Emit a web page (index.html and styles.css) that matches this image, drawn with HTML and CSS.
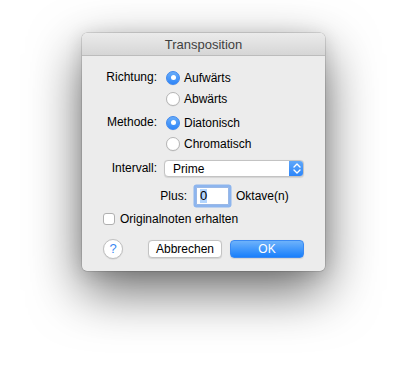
FILE: index.html
```html
<!DOCTYPE html>
<html lang="de">
<head>
<meta charset="utf-8">
<title>Transposition</title>
<link rel="stylesheet" href="styles.css">
</head>
<body>
<div class="stage">
  <div class="window">
    <div class="titlebar">Transposition</div>
    <div class="content">
      <div class="group">
        <div class="label">Richtung:</div>
        <div class="options">
          <div class="option"><span class="radio on"></span><span>Aufwärts</span></div>
          <div class="option"><span class="radio"></span><span>Abwärts</span></div>
        </div>
      </div>
      <div class="group group-2">
        <div class="label">Methode:</div>
        <div class="options">
          <div class="option"><span class="radio on"></span><span>Diatonisch</span></div>
          <div class="option"><span class="radio"></span><span>Chromatisch</span></div>
        </div>
      </div>
      <div class="popup-row">
        <div class="label">Intervall:</div>
        <div class="popup">
          <span class="popup-text">Prime</span>
          <span class="popup-arrows">
            <svg width="8" height="11" viewBox="0 0 8 11"><path d="M1 4 L4 1 L7 4 M1 7 L4 10 L7 7" fill="none" stroke="#fff" stroke-width="1.4" stroke-linecap="round" stroke-linejoin="round"/></svg>
          </span>
        </div>
      </div>
      <div class="plus-row">
        <div class="plus-label">Plus:</div>
        <div class="textfield"><span class="sel">0</span></div>
        <div class="unit">Oktave(n)</div>
      </div>
      <div class="check-row">
        <span class="checkbox"></span>
        <span>Originalnoten erhalten</span>
      </div>
      <div class="buttons">
        <span class="help">?</span>
        <span class="btn">Abbrechen</span>
        <span class="btn primary">OK</span>
      </div>
    </div>
  </div>
</div>
</body>
</html>
```

FILE: styles.css
```css
html, body {
  margin: 0;
  padding: 0;
  background: #ffffff;
}

body {
  font-family: "Liberation Sans", Arial, sans-serif;
  font-size: 12px;
  color: #000;
}

.stage {
  padding: 33px 0 0 82px;
  width: 414px;
  height: 387px;
  box-sizing: border-box;
}

.window {
  width: 243px;
  height: 238px;
  box-sizing: border-box;
  background: #ececec;
  border-radius: 5px;
  box-shadow: 0 0 0 0.5px rgba(0, 0, 0, 0.22), 0 20px 52px rgba(0, 0, 0, 0.58), 0 2px 18px rgba(0, 0, 0, 0.12);
  overflow: hidden;
  display: flex;
  flex-direction: column;
}

.titlebar {
  height: 22px;
  line-height: 23px;
  background: linear-gradient(#ebebeb, #d6d6d6);
  border-bottom: 1px solid #bcbcbc;
  text-align: center;
  font-size: 13px;
  color: #3f3f3f;
  flex: none;
}

.content {
  padding-top: 11px;
  display: flex;
  flex-direction: column;
}

.group {
  display: grid;
  grid-template-columns: 75px 1fr;
  column-gap: 9px;
}

.group-2 {
  margin-top: 3px;
}

.label {
  text-align: right;
  line-height: 21px;
}

.options {
  display: flex;
  flex-direction: column;
}

.option {
  height: 21px;
  display: flex;
  align-items: center;
  gap: 4px;
}

.radio {
  width: 14px;
  height: 14px;
  box-sizing: border-box;
  border-radius: 50%;
  background: #fff;
  border: 1px solid #b5b5b5;
  box-shadow: 0 0.5px 0.5px rgba(0, 0, 0, 0.08);
  display: flex;
  align-items: center;
  justify-content: center;
  flex: none;
}

.radio.on {
  background: linear-gradient(#68acf9, #2f86f8);
  border-color: #3d87ee;
}

.radio.on::after {
  content: "";
  width: 5px;
  height: 5px;
  border-radius: 50%;
  background: #fff;
}

.popup-row {
  margin-top: 6px;
  display: flex;
  align-items: center;
  height: 17px;
}

.popup-row .label {
  width: 75px;
  line-height: 17px;
}

.popup {
  margin-left: 7px;
  width: 140px;
  height: 17px;
  box-sizing: border-box;
  background: #fff;
  border: 1px solid #c3c3c3;
  border-radius: 4px;
  display: flex;
  align-items: center;
  overflow: hidden;
  box-shadow: 0 0.5px 1px rgba(0, 0, 0, 0.1);
}

.popup-text {
  flex: 1;
  padding-left: 8px;
}

.popup-arrows {
  width: 15px;
  height: 17px;
  margin-right: -1px;
  background: linear-gradient(#62a9f9, #2a84fa);
  display: flex;
  align-items: center;
  justify-content: center;
}

.plus-row {
  margin-top: 10px;
  display: flex;
  align-items: center;
  height: 18px;
}

.plus-label {
  width: 105px;
  text-align: right;
}

.textfield {
  margin-left: 9px;
  width: 33px;
  height: 18px;
  box-sizing: border-box;
  background: #fff;
  border: 1px solid #9ab8e6;
  box-shadow: 0 0 0 2.5px #8db5ee;
  border-radius: 1px;
  padding-left: 3px;
  display: flex;
  align-items: center;
  font-size: 13px;
}

.sel {
  background: #b3d5fd;
  line-height: 14px;
}

.unit {
  margin-left: 7px;
}

.check-row {
  margin-top: 7px;
  padding-left: 21px;
  display: flex;
  align-items: center;
  gap: 5px;
  height: 13px;
}

.checkbox {
  width: 12px;
  height: 12px;
  box-sizing: border-box;
  background: #fff;
  border: 1px solid #b0b0b0;
  border-radius: 3px;
  flex: none;
}

.buttons {
  margin-top: 14px;
  padding: 0 21px;
  display: flex;
  align-items: center;
  height: 19px;
}

.help {
  width: 20px;
  height: 20px;
  box-sizing: border-box;
  border-radius: 50%;
  background: #fff;
  border: 1px solid #c0c0c0;
  color: #3b8af3;
  font-size: 13px;
  display: flex;
  align-items: center;
  justify-content: center;
  box-shadow: 0 0.5px 1px rgba(0, 0, 0, 0.12);
}

.btn {
  margin-left: 25px;
  width: 74px;
  height: 18px;
  box-sizing: border-box;
  background: #fff;
  border: 1px solid #c3c3c3;
  border-radius: 4px;
  display: flex;
  align-items: center;
  justify-content: center;
  box-shadow: 0 0.5px 1px rgba(0, 0, 0, 0.1);
}

.btn.primary {
  margin-left: 8px;
  background: linear-gradient(#6db2fb, #197ffb);
  border-color: #3a89f2;
  color: #fff;
}
```
